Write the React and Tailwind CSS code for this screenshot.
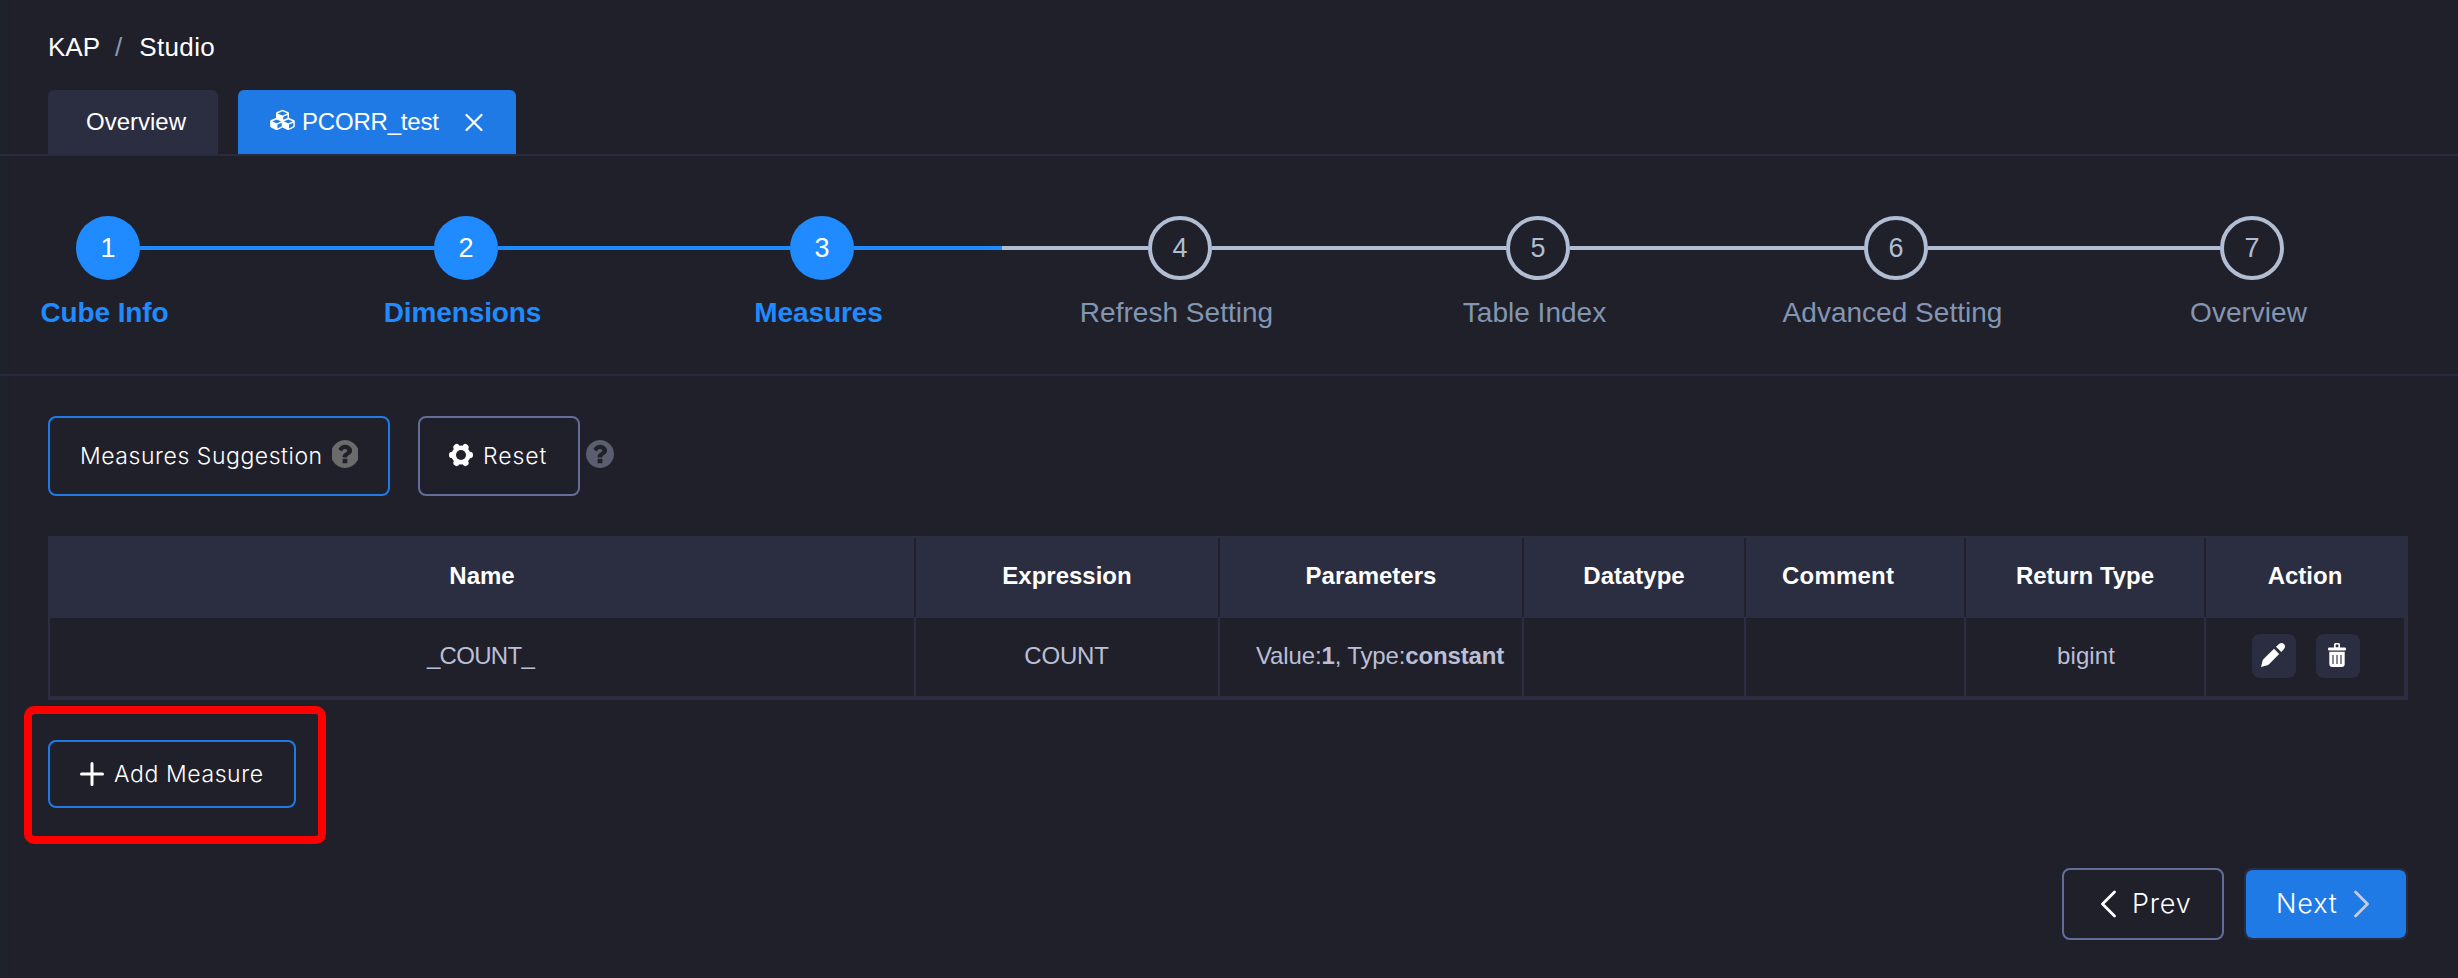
import React from "react";

const steps = [
  { label: "Cube Info", state: "done", gap: "w-[294px]" },
  { label: "Dimensions", state: "done", gap: "w-[292px]" },
  { label: "Measures", state: "current", gap: "w-[294px]" },
  { label: "Refresh Setting", state: "todo", gap: "w-[294px]" },
  { label: "Table Index", state: "todo", gap: "w-[294px]" },
  { label: "Advanced Setting", state: "todo", gap: "w-[292px]" },
  { label: "Overview", state: "todo" },
];

function CubesIcon() {
  return (
    <svg className="mb-[5px] h-[21px] w-[25px]" viewBox="0 0 2176 1856" fill="currentColor" fillRule="evenodd">
      <path
        transform="translate(0 1850) scale(1 -1)"
        d="M640 128l384 192v314l-384 -164v-342zM576 582l404 173l-404 173l-404 -173zM1664 128l384 192v314l-384 -164v-342zM1600 582l404 173l-404 173l-404 -173zM1152 896l384 165v266l-384 -164v-267zM1088 1270l441 189l-441 189l-441 -189zM2176 755v-416q0 -36 -19 -67t-52 -47l-448 -224q-25 -14 -57 -14t-57 14l-448 224q-4 2 -7 4q-2 -2 -7 -4l-448 -224q-25 -14 -57 -14t-57 14l-448 224q-33 16 -52 47t-19 67v416q0 38 21.5 70t56.5 48l434 186v400q0 38 21.5 70t56.5 48l448 192q23 10 50 10t50 -10l448 -192q35 -16 56.5 -48t21.5 -70v-400l434 -186q36 -16 57 -48t21 -70z"
      />
    </svg>
  );
}

function HelpIcon({ className }) {
  return (
    <svg className={className} viewBox="128 128 1536 1536" preserveAspectRatio="xMidYMid slice" fill="currentColor">
      <path d="M1024 1376v-192q0-14-9-23t-23-9h-192q-14 0-23 9t-9 23v192q0 14 9 23t23 9h192q14 0 23-9t9-23zm256-672q0-88-55.5-163t-138.5-116-170-41q-243 0-371 213-15 24 8 42l132 100q7 6 19 6 16 0 25-12 53-68 86-92 34-24 86-24 48 0 85.5 26t37.5 59q0 38-20 61t-68 45q-63 28-115.5 86.5t-52.5 125.5v36q0 14 9 23t23 9h192q14 0 23-9t9-23q0-19 21.5-49.5t54.5-49.5q32-18 49-28.5t46-35 44.5-48 28-60.5 12.5-81zm384 192q0 209-103 385.5t-279.5 279.5-385.5 103-385.5-103-279.5-279.5-103-385.5 103-385.5 279.5-279.5 385.5-103 385.5 103 279.5 279.5 103 385.5z" />
    </svg>
  );
}

function GearIcon() {
  return (
    <svg className="mb-0.5 h-6 w-6" viewBox="-12 -12 24 24">
      <g stroke="#fff" strokeWidth="6.4" strokeLinecap="round">
        <path d="M-8.8 0H8.8M-4.4 -7.8L4.4 7.8M-4.4 7.8L4.4 -7.8" />
      </g>
      <circle r="9.4" fill="#fff" />
      <circle r="5" fill="#21202b" />
    </svg>
  );
}

function PencilIcon() {
  return (
    <svg className="h-11 w-11" viewBox="0 0 44 44" fill="#fff">
      <path d="M9 33L10.6 26.4Q10.9 25.6 11.6 24.9L22 14.8L27.2 20L17 30.3Q16.3 31 15.4 31.3Z" />
      <path d="M24 12.8L27 9.9C28.6 8.5 30.6 8.6 32 10S33.4 13.5 32 15L29.2 18Z" />
    </svg>
  );
}

function TrashIcon() {
  return (
    <svg className="h-11 w-11" viewBox="0 0 44 44" fill="#fff">
      <path fillRule="evenodd" d="M18 14V10.5Q18 9 19.5 9H22.5Q24 9 24 10.5V14ZM19.7 13.4H22.4V10.6H19.7Z" />
      <rect x="12" y="13.6" width="18" height="2.8" rx="1.2" />
      <path d="M13.3 17.8H28.7V30Q28.7 33 25.7 33H16.3Q13.3 33 13.3 30Z" />
      <path d="M17 21V30M21 21V30M25 21V30" stroke="#4a4c5e" strokeWidth="1.3" />
    </svg>
  );
}

function Stepper() {
  return (
    <div className="flex h-[220px] items-start border-b-2 border-[#272a3a] pt-15 pl-[76px]">
      {steps.map((step, i) => {
        const active = step.state !== "todo";
        return (
          <React.Fragment key={step.label}>
            <div className="flex w-16 shrink-0 flex-col items-center">
              <div
                className={
                  active
                    ? "flex size-16 items-center justify-center rounded-full bg-[#1f8bff] text-[27px] text-white"
                    : "flex size-16 items-center justify-center rounded-full border-4 border-[#b0bdd2] text-[27px] text-[#b0bdd2]"
                }
              >
                {i + 1}
              </div>
              <div
                className={
                  active
                    ? "mt-[15px] mr-[7px] text-[28px] leading-9 font-bold tracking-[-0.1px] whitespace-nowrap text-[#1f8bff]"
                    : "mt-[15px] mr-[7px] text-[28px] leading-9 tracking-[0.02px] whitespace-nowrap text-[#8296b3]"
                }
              >
                {step.label}
              </div>
            </div>
            {step.gap && (
              <div className={"mt-[30px] flex h-1 shrink-0 " + step.gap}>
                <div className={active ? "w-[148px] bg-[#1f8bff]" : "w-[148px] bg-[#b0bdd2]"} />
                <div className={step.state === "done" ? "flex-1 bg-[#1f8bff]" : "flex-1 bg-[#b0bdd2]"} />
              </div>
            )}
          </React.Fragment>
        );
      })}
    </div>
  );
}

const columns = ["Name", "Expression", "Parameters", "Datatype", "Comment", "Return Type", "Action"];

function MeasuresTable() {
  const cols = "grid grid-cols-[866px_304px_304px_222px_220px_240px_198px]";
  return (
    <div className="mt-10 mr-[50px] ml-12 h-[164px] border-t-2 border-r-4 border-b-4 border-l-2 border-[#2b2d40] text-2xl">
      <div className={cols + " h-20 bg-[#2b2d40] font-bold text-white"}>
        {columns.map((name, i) => (
          <div
            key={name}
            className={
              "mb-px flex items-center pb-[3px] " +
              (name === "Comment" ? "pl-9 tracking-[0.2px] " : "justify-center ") +
              (i < 6 ? "border-r-2 border-[#21202b]" : "")
            }
          >
            {name}
          </div>
        ))}
      </div>
      <div className={cols + " h-[78px] text-[#bbbfd6] *:flex *:items-center *:border-[#2b2d40] *:pb-0.5"}>
        <div className="justify-center border-r-2 pr-[3px] tracking-[-0.7px]">_COUNT_</div>
        <div className="justify-center border-r-2 pr-px tracking-[-0.2px]">COUNT</div>
        <div className="border-r-2 pl-9 tracking-[-0.14px] whitespace-pre">
          Value:<b>1</b>, Type:<b>constant</b>
        </div>
        <div className="border-r-2" />
        <div className="border-r-2" />
        <div className="justify-center border-r-2 pl-0.5 tracking-[0.1px]">bigint</div>
        <div className="justify-center gap-5 pl-0.5">
          <button className="size-11 rounded-lg bg-[#2b2d40]">
            <PencilIcon />
          </button>
          <button className="size-11 rounded-lg bg-[#2b2d40]">
            <TrashIcon />
          </button>
        </div>
      </div>
    </div>
  );
}

export default function App() {
  return (
    <div className="flex h-[978px] w-[2458px] flex-col overflow-hidden bg-[#20202b] bg-[linear-gradient(to_right,#1d2228,#20212a_14px,#20202b_20px)] font-['Liberation_Sans',Arial,sans-serif] text-white">
      <div className="mt-8 flex h-[30px] items-center pl-12 text-[26px] leading-[30px]">
        <span>KAP</span>
        <span className="ml-[15px] text-[#8a9bb5]">/</span>
        <span className="ml-[17px] tracking-[0.35px]">Studio</span>
      </div>

      <div className="mt-7 flex h-[66px] gap-5 border-b-2 border-[#292b3e] pl-12 text-2xl">
        <div className="flex h-16 w-[170px] items-center rounded-t-md bg-[#2b2d40] pl-[38px]">Overview</div>
        <div className="flex h-16 w-[278px] items-center rounded-t-md bg-[#1f7ae6] pl-8">
          <CubesIcon />
          <span className="ml-[7px] tracking-[-0.2px]">PCORR_test</span>
          <svg className="ml-[26px] size-[18px]" viewBox="0 0 18 18" stroke="#fff" strokeWidth="2.2" strokeLinecap="round">
            <path d="M1.5 2L16.5 17M16.5 2L1.5 17" />
          </svg>
        </div>
      </div>

      <Stepper />

      <div className="mt-10 flex h-20 pl-12 font-[Inter,sans-serif] text-[23px] font-[350] tracking-[0.55px]">
        <button className="flex w-[342px] items-center rounded-lg border-2 border-[#1f7ae6] pl-[30px] whitespace-nowrap">
          <span className="w-[244px] text-left">Measures Suggestion</span>
          <HelpIcon className="mb-1 ml-2 h-7 w-[26px] text-[#6b6b6b]" />
        </button>
        <button className="ml-7 flex w-[162px] items-center rounded-lg border-2 border-[#646d99] pl-[29px]">
          <GearIcon />
          <span className="ml-2.5 tracking-[0.9px]">Reset</span>
        </button>
        <HelpIcon className="mt-6 ml-1.5 size-7 text-[#5a5e6e]" />
      </div>

      <MeasuresTable />

      <div className="mt-1.5 ml-6 flex h-[138px] w-[302px] items-center rounded-[10px] border-8 border-[#ff0000] pl-4">
        <button className="mt-[-2px] flex h-[68px] w-[248px] items-center rounded-lg border-2 border-[#1f7ae6] pl-[30px] font-[Inter,sans-serif] text-[23px] font-[350] tracking-[0.6px] whitespace-nowrap">
          <svg className="size-6" viewBox="0 0 24 24" stroke="#fff" strokeWidth="3" strokeLinecap="round">
            <path d="M12 1.5V22.5M1.5 12H22.5" />
          </svg>
          <span className="ml-2.5">Add Measure</span>
        </button>
      </div>

      <div className="mt-6 flex h-[72px] justify-end gap-5 pr-[50px] font-[Inter,sans-serif] text-[27px] font-[350] tracking-[0.8px]">
        <button className="flex w-[162px] items-center rounded-lg border-2 border-[#646d99] pl-[37px]">
          <svg className="h-[28px] w-4" viewBox="0 0 16 28" fill="none" stroke="#fff" strokeWidth="2.8" strokeLinecap="round" strokeLinejoin="round">
            <path d="M13.5 2L1.5 14L13.5 26" />
          </svg>
          <span className="ml-[15px]">Prev</span>
        </button>
        <button className="flex w-[164px] items-center rounded-lg border-2 border-[#292b3e] bg-[#1f7ae6] bg-clip-padding pl-[30px]">
          <span className="w-[61px] text-left">Next</span>
          <svg className="ml-4 h-[28px] w-4" viewBox="0 0 16 28" fill="none" stroke="#c6cbdd" strokeWidth="2.8" strokeLinecap="round" strokeLinejoin="round">
            <path d="M2.5 2L14.5 14L2.5 26" />
          </svg>
        </button>
      </div>
    </div>
  );
}
